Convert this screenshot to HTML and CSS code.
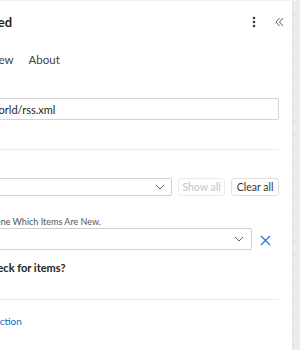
FILE: index.html
```html
<!DOCTYPE html>
<html lang="en">
    <head>
        <meta charset="UTF-8" />
        <meta name="viewport" content="width=device-width, initial-scale=1.0" />
        <title>Feed</title>
        <link rel="stylesheet" href="styles.css">
    </head>
    <body>
        <div class="page">
            <main class="panel">
                <header class="panel-head">
                    <h1 class="panel-title">Feed</h1>
                    <div class="head-actions">
                        <button type="button" class="icon-button" aria-label="More">
                            <svg width="4" height="12" viewBox="0 0 4 12">
                                <circle cx="2" cy="2" r="1.3" fill="#3a3a3a" />
                                <circle cx="2" cy="6" r="1.3" fill="#3a3a3a" />
                                <circle cx="2" cy="10" r="1.3" fill="#3a3a3a" />
                            </svg>
                        </button>
                        <button type="button" class="icon-button" aria-label="Collapse">
                            <svg width="9" height="10" viewBox="0 0 9 10" fill="none" stroke="#555" stroke-width="1">
                                <path d="M4.5 1 L1 5 L4.5 9" />
                                <path d="M8 1 L4.5 5 L8 9" />
                            </svg>
                        </button>
                    </div>
                </header>

                <nav class="tabs">
                    <a href="#" class="tab">View</a>
                    <a href="#" class="tab">About</a>
                </nav>

                <input class="url-input" type="text" value="world/rss.xml" />

                <hr class="divider divider-top" />

                <div class="filter-row">
                    <div class="select select-wide">
                        <span class="select-value"></span>
                        <svg class="chevron" width="10" height="6" viewBox="0 0 10 6" fill="none" stroke="#666" stroke-width="1">
                            <path d="M1 1 L5 5 L9 1" />
                        </svg>
                    </div>
                    <button type="button" class="small-button" disabled>Show all</button>
                    <button type="button" class="small-button">Clear all</button>
                </div>

                <p class="hint">Define Which Items Are New.</p>
                <div class="field-row">
                    <div class="select select-field">
                        <span class="select-value"></span>
                        <svg class="chevron" width="10" height="6" viewBox="0 0 10 6" fill="none" stroke="#666" stroke-width="1">
                            <path d="M1 1 L5 5 L9 1" />
                        </svg>
                    </div>
                    <button type="button" class="clear-button" aria-label="Remove">
                        <svg width="11" height="11" viewBox="0 0 11 11" fill="none" stroke="#2b7cd3" stroke-width="1.4">
                            <path d="M1 1 L10 10 M10 1 L1 10" />
                        </svg>
                    </button>
                </div>

                <h2 class="question">Check for items?</h2>

                <hr class="divider divider-bottom" />

                <a href="#" class="link">Section</a>
            </main>
            <div class="side-rail"></div>
        </div>
    </body>
</html>
```

FILE: styles.css
```css
* {
    box-sizing: border-box;
    margin: 0;
    padding: 0;
    font-family: "Lato", "Open Sans", sans-serif;
}

body {
    background-color: #ffffff;
    color: #242424;
    overflow: hidden;
    height: 350px;
}

.page {
    display: flex;
    height: 100%;
    border-top: 1px solid #f0f0f0;
}

.panel {
    flex: 1;
    margin-left: -16px;
    padding-right: 13px;
    display: flex;
    flex-direction: column;
}

.panel-head {
    display: flex;
    align-items: center;
    justify-content: space-between;
    height: 42px;
    margin-right: -10px;
}

.panel-title {
    font-size: 13px;
    font-weight: 700;
    line-height: 20px;
    color: #1f1f1f;
}

.head-actions {
    display: flex;
    gap: 5px;
}

.icon-button {
    width: 20px;
    height: 20px;
    border: none;
    background: none;
    display: flex;
    align-items: center;
    justify-content: center;
}

.tabs {
    display: flex;
    gap: 15px;
    margin-top: 9px;
    padding-left: 4px;
}

.tab {
    font-size: 11.5px;
    line-height: 16px;
    color: #424242;
    text-decoration: none;
}

.url-input {
    margin-top: 30px;
    height: 22px;
    border: 1px solid #d4d4d4;
    border-radius: 2px;
    padding: 0 8px 0 5px;
    font-size: 11px;
    color: #242424;
}

.divider {
    border: none;
    border-top: 1px solid #ececec;
}

.divider-top {
    margin-top: 29px;
}

.filter-row {
    display: flex;
    gap: 6px;
    margin-top: 28px;
    height: 18px;
}

.select {
    display: flex;
    align-items: center;
    justify-content: space-between;
    border: 1px solid #cfcfcf;
    border-radius: 2px;
    padding: 0 6px 0 8px;
}

.select-wide {
    flex: 1;
}

.small-button {
    width: 47px;
    border: 1px solid #e0e0e0;
    border-radius: 3px;
    background: #ffffff;
    font-size: 10.5px;
    color: #333333;
}

.small-button:disabled {
    color: #c6c6c6;
    border-color: #ececec;
}

.small-button + .small-button {
    width: 48px;
}

.hint {
    margin-top: 21px;
    font-size: 9px;
    line-height: 10px;
    color: #555555;
}

.field-row {
    display: flex;
    align-items: center;
    margin-top: 1px;
    height: 22px;
}

.select-field {
    width: 268px;
    height: 22px;
    padding-right: 7px;
}

.clear-button {
    width: 26px;
    height: 22px;
    border: none;
    background: none;
    display: flex;
    align-items: center;
    justify-content: center;
    padding-top: 2px;
}

.question {
    margin-top: 10px;
    font-size: 11px;
    font-weight: 700;
    line-height: 16px;
    color: #242424;
}

.divider-bottom {
    margin-top: 23px;
}

.link {
    margin-top: 14px;
    margin-left: 5px;
    align-self: flex-start;
    font-size: 10px;
    line-height: 14px;
    color: #0f6cbd;
    text-decoration: none;
}

.side-rail {
    width: 8px;
    flex-shrink: 0;
    background-color: #ececec;
    border-left: 1px solid #e2e2e2;
    background-image: repeating-linear-gradient(
        to bottom,
        transparent 0,
        transparent 14px,
        #d8d8d8 14px,
        #d8d8d8 15px
    );
    background-size: 2px 100%;
    background-repeat: no-repeat;
}
```
